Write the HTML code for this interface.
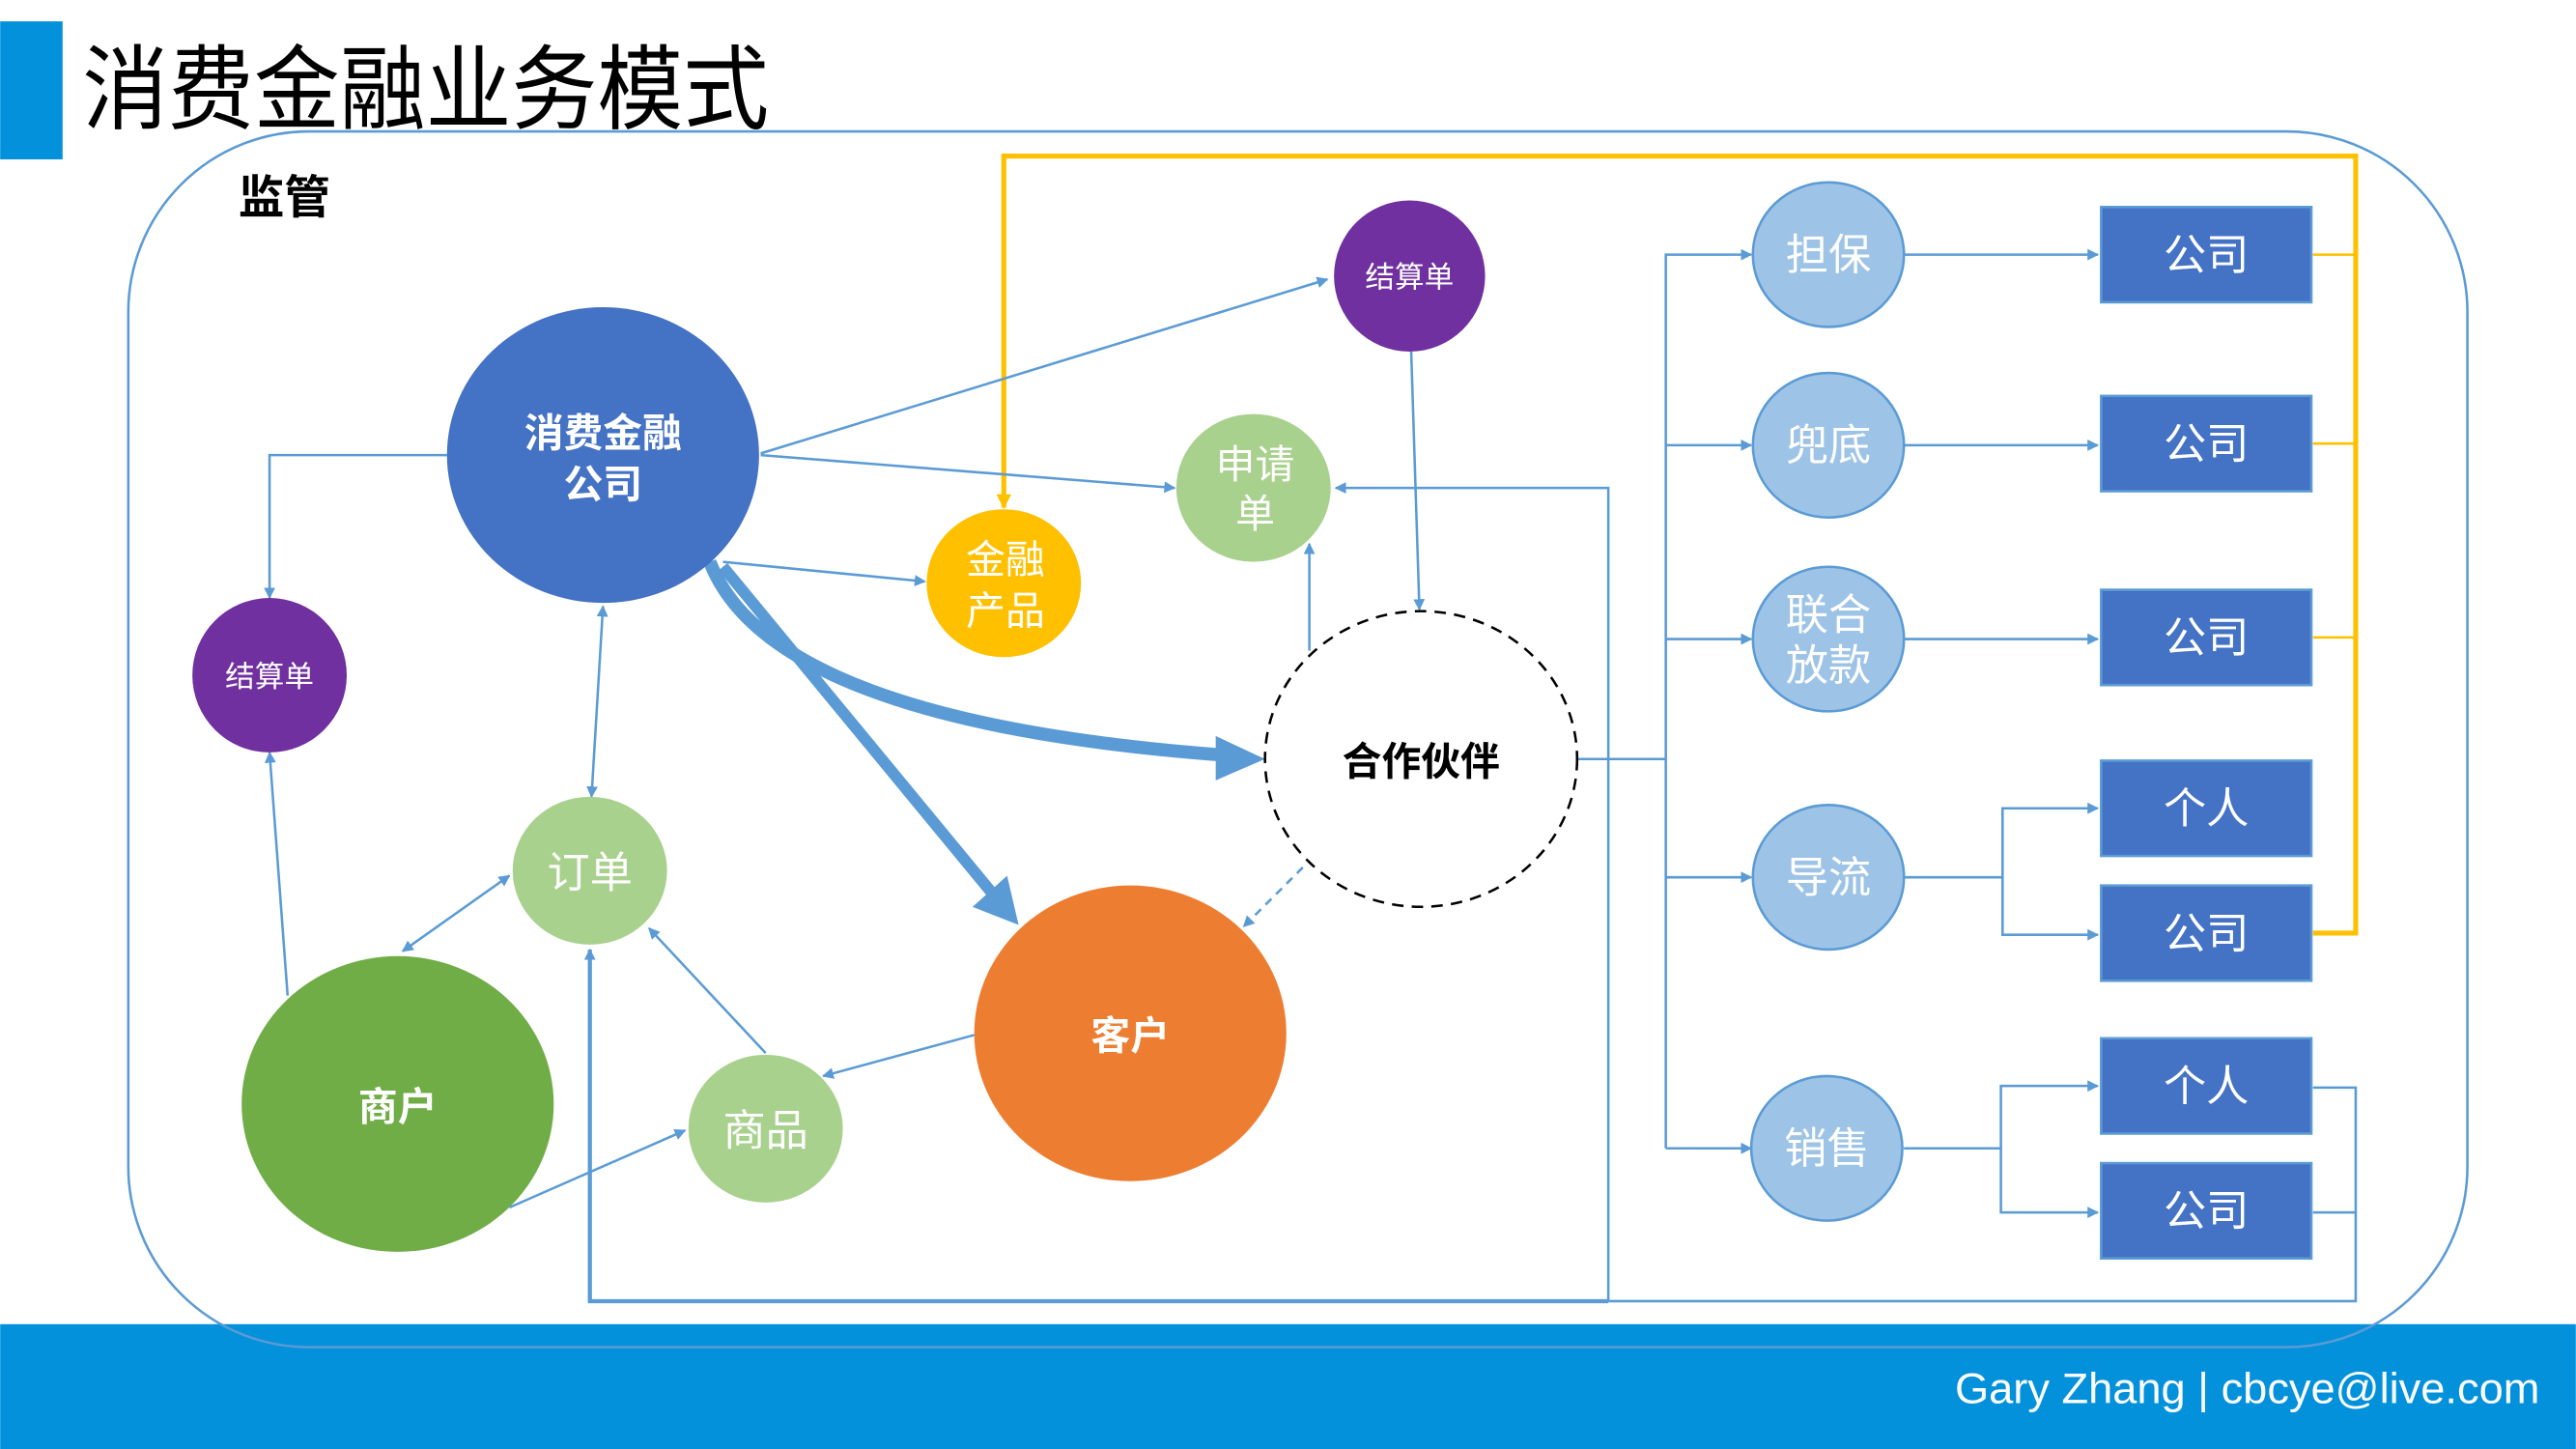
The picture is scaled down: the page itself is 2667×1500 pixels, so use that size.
<!DOCTYPE html>
<html><head><meta charset="utf-8"><style>
html,body{margin:0;padding:0;background:#fff;overflow:hidden}
svg{display:block}
text{font-family:"Liberation Sans","Noto Sans CJK SC",sans-serif}
</style></head><body>
<svg width="2667" height="1500" viewBox="0 0 1568 882" xmlns="http://www.w3.org/2000/svg">
<defs>
<marker id="a" viewBox="0 0 10 10" refX="9" refY="5" markerWidth="7" markerHeight="7" orient="auto-start-reverse" markerUnits="userSpaceOnUse"><path d="M0,0L10,5L0,10z" fill="#5B9BD5"/></marker>
<marker id="y" viewBox="0 0 10 10" refX="9" refY="5" markerWidth="9" markerHeight="9" orient="auto" markerUnits="userSpaceOnUse"><path d="M0,0L10,5L0,10z" fill="#FFC000"/></marker>
</defs>
<rect width="1568" height="882" fill="#fff"/>
<rect x="0" y="806" width="1568" height="76" fill="#0291DA"/>
<text x="1190" y="854" font-size="26" fill="#fff" textLength="356" lengthAdjust="spacingAndGlyphs">Gary Zhang | cbcye@live.com</text>
<rect x="0" y="13" width="38" height="84" fill="#0291DA"/>
<text x="50" y="74" font-size="56" fill="#000" textLength="418" lengthAdjust="spacingAndGlyphs">消费金融业务模式</text>
<rect x="78" y="80" width="1424" height="740" rx="110" ry="110" fill="none" stroke="#5B9BD5" stroke-width="1.5"/>
<text x="145" y="130" font-size="28" font-weight="bold">监管</text>

<g fill="none" stroke="#FFC000" stroke-width="3">
<path d="M1408,568 H1434 V95 H611 V309" marker-end="url(#y)"/>
</g>
<g fill="none" stroke="#FFC000" stroke-width="1.5">
<path d="M1408,155H1434M1408,270H1434M1408,388H1434"/>
</g>

<g fill="none" stroke="#5B9BD5" stroke-width="1.5">
<path d="M463,276 L808,170" marker-end="url(#a)"/>
<path d="M463,277 L715,297" marker-end="url(#a)"/>
<path d="M440,342 L563,354" marker-end="url(#a)"/>
<path d="M272,277 H164 V364" marker-end="url(#a)"/>
<path d="M859,214 L864,371" marker-end="url(#a)"/>
<path d="M797,396 V331" marker-end="url(#a)"/>
<path d="M367,369 L360,485" marker-start="url(#a)" marker-end="url(#a)"/>
<path d="M310,533 L245,579" marker-start="url(#a)" marker-end="url(#a)"/>
<path d="M175,606 L164,458" marker-end="url(#a)"/>
<path d="M310,735 L417,688" marker-end="url(#a)"/>
<path d="M466,641 L395,565" marker-end="url(#a)"/>
<path d="M593,630 L501,655" marker-end="url(#a)"/>
<path d="M793,528 L757,564" stroke-dasharray="5,4" marker-end="url(#a)"/>
<path d="M979,792 V297 H813" marker-end="url(#a)"/>
<path d="M979,792 H359 V578" stroke-width="2.5" marker-end="url(#a)"/>
<path d="M979,792 H1434 V662 H1408 M1434,738 H1408"/>
<path d="M960,462 H1014"/>
<path d="M1014,699 V155 H1066" marker-end="url(#a)"/>
<path d="M1014,271 H1066" marker-end="url(#a)"/>
<path d="M1014,389 H1066" marker-end="url(#a)"/>
<path d="M1014,534 H1066" marker-end="url(#a)"/>
<path d="M1014,699 H1066" marker-end="url(#a)"/>
<path d="M1159,155 H1277" marker-end="url(#a)"/>
<path d="M1159,271 H1277" marker-end="url(#a)"/>
<path d="M1159,389 H1277" marker-end="url(#a)"/>
<path d="M1159,534 H1219 V492 H1277" marker-end="url(#a)"/>
<path d="M1219,534 V569 H1277" marker-end="url(#a)"/>
<path d="M1159,699 H1218 V661 H1277" marker-end="url(#a)"/>
<path d="M1218,699 V738 H1277" marker-end="url(#a)"/>
</g>
<path d="M432,342 Q470,440 750,460" fill="none" stroke="#5B9BD5" stroke-width="8"/>
<path d="M740,448 L770,462 L740,475z" fill="#5B9BD5"/>
<path d="M440,345 L605,545" fill="none" stroke="#5B9BD5" stroke-width="7"/>
<path d="M592,552 L620,563 L613,533z" fill="#5B9BD5"/>

<ellipse cx="367" cy="277" rx="95" ry="90" fill="#4472C4"/>
<text x="367" y="272" font-size="24" font-weight="bold" fill="#fff" text-anchor="middle">消费金融</text>
<text x="367" y="303" font-size="24" font-weight="bold" fill="#fff" text-anchor="middle">公司</text>
<circle cx="858" cy="168" r="46" fill="#7030A0"/>
<text x="858" y="175" font-size="18" fill="#fff" text-anchor="middle">结算单</text>
<circle cx="164" cy="411" r="47" fill="#7030A0"/>
<text x="164" y="418" font-size="18" fill="#fff" text-anchor="middle">结算单</text>
<ellipse cx="763" cy="297" rx="47" ry="45" fill="#A9D18E"/>
<text x="764" y="291" font-size="24" fill="#fff" text-anchor="middle">申请</text>
<text x="764" y="321" font-size="24" fill="#fff" text-anchor="middle">单</text>
<ellipse cx="611" cy="355" rx="47" ry="45" fill="#FFC000"/>
<text x="612" y="349" font-size="24" fill="#fff" text-anchor="middle">金融</text>
<text x="612" y="380" font-size="24" fill="#fff" text-anchor="middle">产品</text>
<ellipse cx="865" cy="462" rx="95" ry="90" fill="#fff" stroke="#000" stroke-width="1.5" stroke-dasharray="7,5"/>
<text x="865" y="472" font-size="24" font-weight="bold" text-anchor="middle">合作伙伴</text>
<ellipse cx="359" cy="530" rx="47" ry="45" fill="#A9D18E"/>
<text x="359" y="540" font-size="26" fill="#fff" text-anchor="middle">订单</text>
<ellipse cx="242" cy="672" rx="95" ry="90" fill="#70AD47"/>
<text x="242" y="682" font-size="24" font-weight="bold" fill="#fff" text-anchor="middle">商户</text>
<ellipse cx="466" cy="687" rx="47" ry="45" fill="#A9D18E"/>
<text x="466" y="697" font-size="26" fill="#fff" text-anchor="middle">商品</text>
<ellipse cx="688" cy="629" rx="95" ry="90" fill="#ED7D31"/>
<text x="688" y="639" font-size="24" font-weight="bold" fill="#fff" text-anchor="middle">客户</text>

<g fill="#9DC3E6" stroke="#5B9BD5" stroke-width="1.5">
<ellipse cx="1113" cy="155" rx="46" ry="44"/>
<ellipse cx="1113" cy="271" rx="46" ry="44"/>
<ellipse cx="1113" cy="389" rx="46" ry="44"/>
<ellipse cx="1113" cy="534" rx="46" ry="44"/>
<ellipse cx="1112" cy="699" rx="46" ry="44"/>
</g>
<g font-size="26" fill="#fff" text-anchor="middle">
<text x="1113" y="164">担保</text>
<text x="1113" y="280">兜底</text>
<text x="1113" y="383">联合</text>
<text x="1113" y="414">放款</text>
<text x="1113" y="543">导流</text>
<text x="1112" y="708">销售</text>
</g>
<g fill="#4472C4" stroke="#5B9BD5" stroke-width="1.5">
<rect x="1279" y="126" width="128" height="58"/>
<rect x="1279" y="241" width="128" height="58"/>
<rect x="1279" y="359" width="128" height="58"/>
<rect x="1279" y="463" width="128" height="58"/>
<rect x="1279" y="539" width="128" height="58"/>
<rect x="1279" y="632" width="128" height="58"/>
<rect x="1279" y="708" width="128" height="58"/>
</g>
<g font-size="26" fill="#fff" text-anchor="middle">
<text x="1343" y="164">公司</text>
<text x="1343" y="279">公司</text>
<text x="1343" y="397">公司</text>
<text x="1343" y="501">个人</text>
<text x="1343" y="577">公司</text>
<text x="1343" y="670">个人</text>
<text x="1343" y="746">公司</text>
</g>
</svg>
</body></html>
